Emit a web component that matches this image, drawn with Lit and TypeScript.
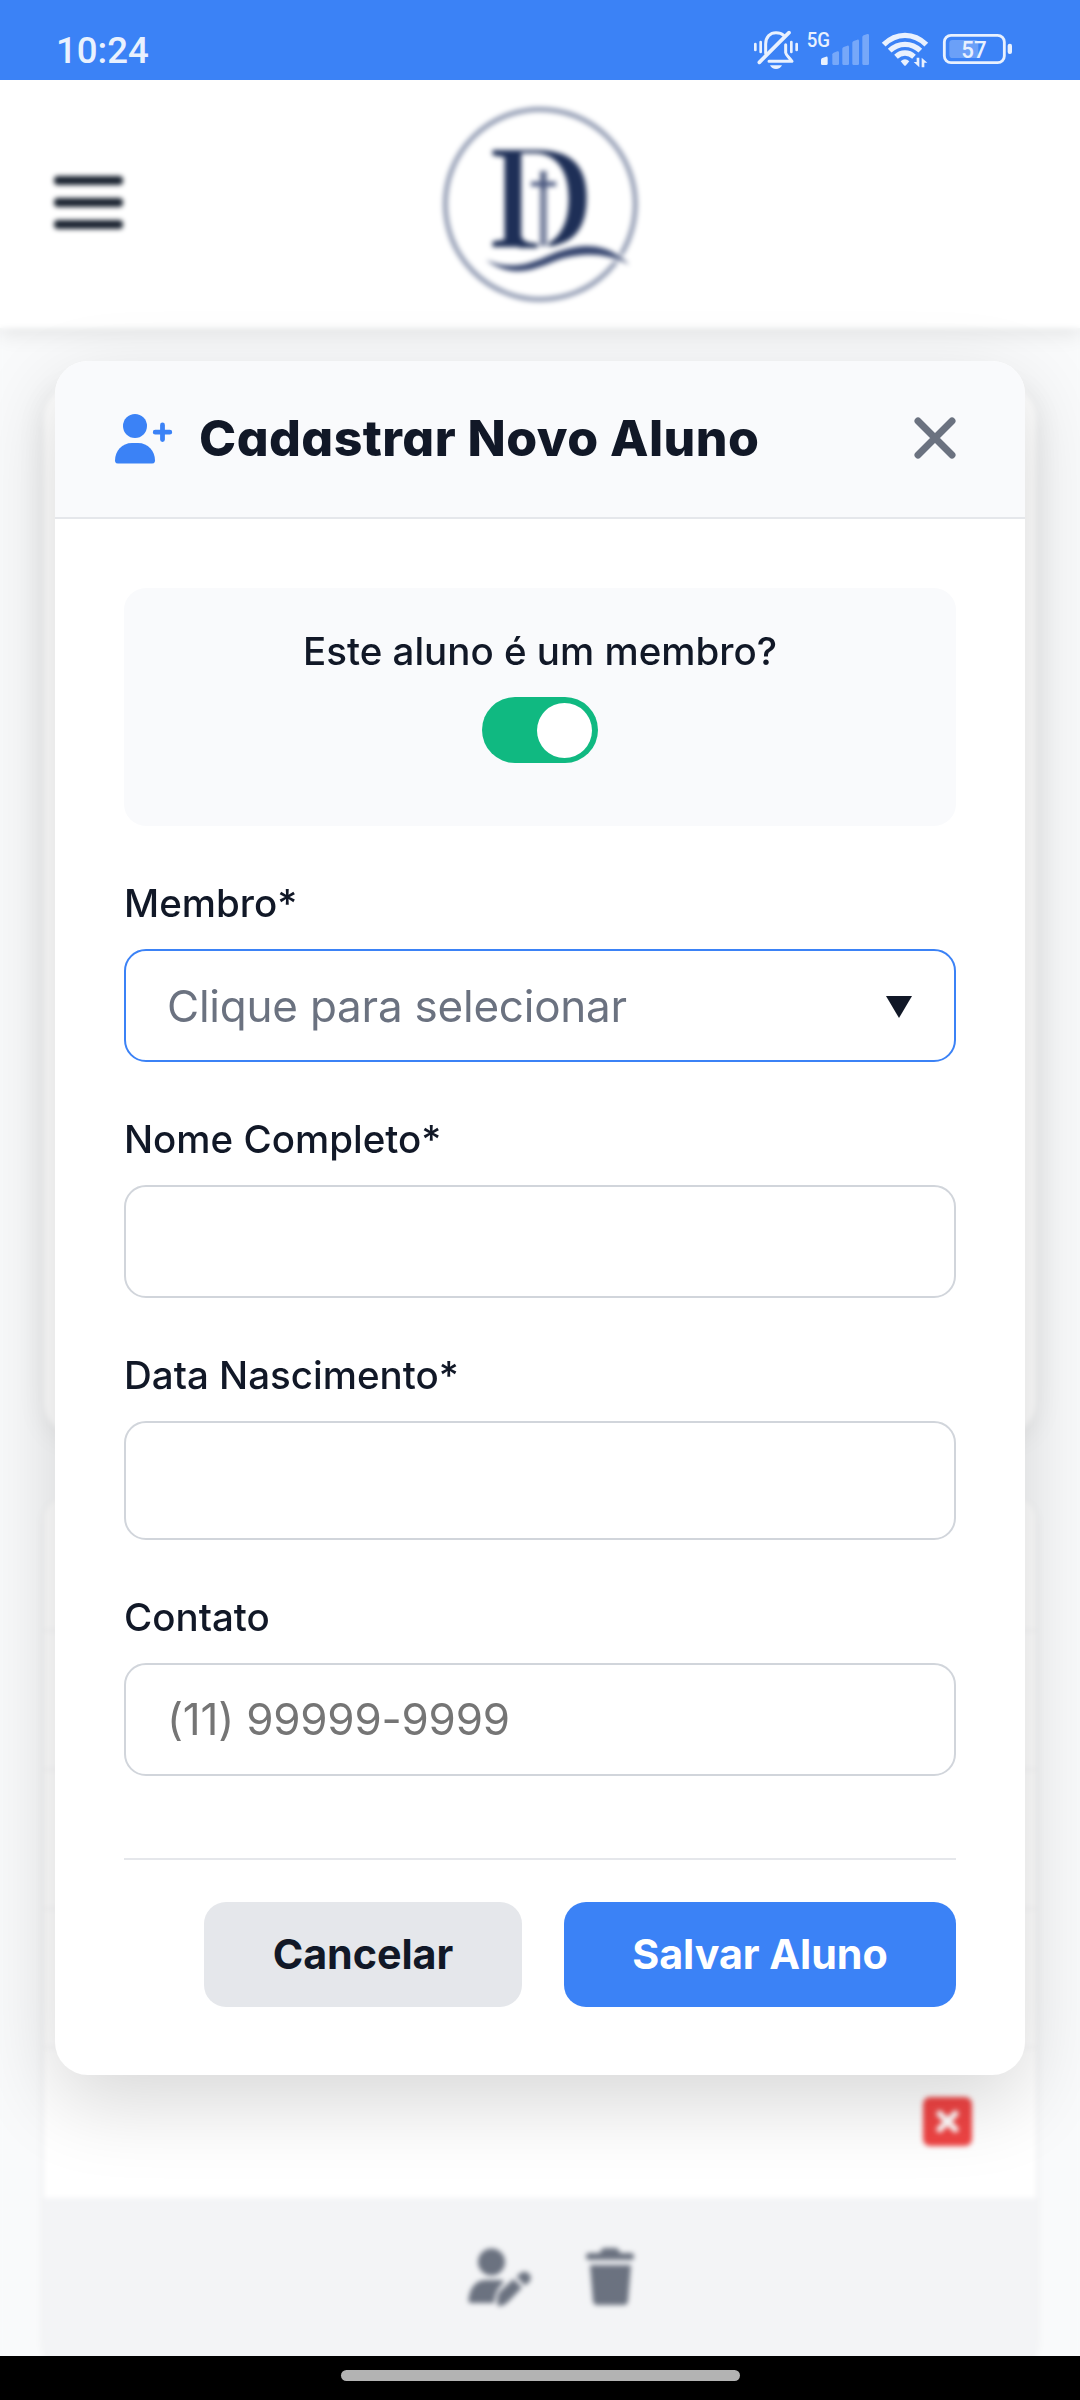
import { LitElement, html, css, svg } from "lit";
import { customElement } from "lit/decorators.js";

@customElement("status-bar")
class StatusBar extends LitElement {
  static styles = css`
    :host {
      display: flex;
      justify-content: space-between;
      box-sizing: border-box;
      height: 80px;
      padding: 28px 66px 0 56px;
      background: #3b82f6;
      color: #e9f1fe;
      font-family: Roboto, sans-serif;
    }
    .clock {
      padding-top: 1px;
      font-size: 36.600px;
      font-weight: 500;
      line-height: 44px;
    }
    .icons {
      display: block;
      width: 264px;
      height: 42px;
    }
    .icons text {
      font-family: Roboto, sans-serif;
      font-weight: 500;
    }
  `;

  render() {
    const bars = [
      [363, 170, 1],
      [397, 154, 0.35],
      [427, 137, 0.35],
      [457, 119, 0.35],
      [487, 102, 0.35],
    ];
    return html`
      <span class="clock">10:24</span>
      <svg class="icons" viewBox="150 84 792 126" fill="#e9f1fe">
        <g fill="none" stroke="#e9f1fe" stroke-width="9" stroke-linecap="round">
          <path d="M197 160V132C197 110 211 98 228 98C238 98 246 101 251 106" />
          <path d="M267 98L178 187" stroke-width="11" />
          <path d="M257 134V158C258 166 266 170 276 184H207" stroke-linejoin="round" />
          <path d="M166 132V150M182 126V156M274 126V156M290 132V150" stroke-width="8" />
        </g>
        <path d="M210 196H246C243 203 236 207 228 207S213 203 210 196Z" />
        <text x="320" y="142" font-size="62" textLength="70" lengthAdjust="spacingAndGlyphs">5G</text>
        ${bars.map(
          ([x, y, o]) => svg`<path opacity=${o} d="M${x} ${y + 9}Q${x} ${y + 6} ${x + 4} ${y + 4}L${x + 15} ${y}Q${x + 20} ${y - 1} ${x + 20} ${y + 4}V191Q${x + 20} 195 ${x + 16} 195H${x + 4}Q${x} 195 ${x} 191Z"/>`
        )}
        <g fill="none" stroke="#e9f1fe" stroke-width="16">
          <path d="M551 134Q579 106 615 106T679 134" />
          <path d="M569 152Q589 133 615 133T661 152" />
          <path d="M588 170Q600 159 615 159T642 170" />
        </g>
        <path d="M602 184Q615 172 628 184L618 196Q615 199 612 196Z" />
        <path d="M650 173H658V202L641 186H650ZM665 202V173L682 188H673V202Z" />
        <rect x="733" y="106" width="180" height="82" rx="20" fill="none" stroke="#e9f1fe" stroke-width="8.5" />
        <rect x="748" y="120" width="87" height="54" rx="10" opacity="0.28" />
        <rect x="923" y="131" width="13" height="31" rx="6" />
        <text x="784" y="174" font-size="70" textLength="76" lengthAdjust="spacingAndGlyphs">57</text>
      </svg>
    `;
  }
}

@customElement("class-page")
class ClassPage extends LitElement {
  static styles = css`
    :host {
      display: flex;
      flex-direction: column;
      height: 2276px;
      background: #f9fafb;
    }
    .top {
      display: grid;
      grid-template-columns: 1fr 240px 1fr;
      align-items: center;
      height: 248px;
      padding: 0 54px;
      background: #fff;
      box-shadow: 0 8px 18px rgba(0, 0, 0, 0.08);
      flex: none;
    }
    .burger {
      display: flex;
      flex-direction: column;
      gap: 12.500px;
      width: 69px;
      margin-top: -3px;
    }
    .burger i {
      height: 9.500px;
      border-radius: 4px;
      background: #19222f;
    }
    .logo {
      display: block;
      width: 240px;
      height: 230px;
      margin-top: 2px;
    }
    .logo text {
      font-family: "Liberation Serif", serif;
      font-weight: 700;
    }
    .card {
      margin: 0 44px;
      background: #fff;
      flex: none;
    }
    .summary {
      height: 1050px;
      margin-top: 57px;
      border-radius: 33px;
      box-shadow: 0 4px 30px rgba(0, 0, 0, 0.07);
    }
    .list {
      margin-top: 62px;
      border-radius: 22px;
      overflow: hidden;
      box-shadow: 0 3px 9px rgba(0, 0, 0, 0.07);
    }
    .row {
      box-sizing: border-box;
      height: 139px;
      border-bottom: 3px solid #f8f8f9;
    }
    .row.first {
      height: 135px;
    }
    .row.last {
      display: flex;
      justify-content: flex-end;
      height: 149px;
      padding: 48px 64px 0;
      border: 0;
    }
    .remove {
      width: 49px;
      height: 49px;
      border-radius: 7px;
      background: #ef4444;
    }
    .actions {
      display: flex;
      justify-content: center;
      gap: 53px;
      height: 164px;
      padding: 46px 0 0 22px;
      box-sizing: border-box;
      background: #f3f4f6;
      color: #6b7280;
    }
    .actions svg {
      height: 64px;
    }
  `;

  render() {
    return html`
      <div class="top">
        <div class="burger"><i></i><i></i><i></i></div>
        <svg class="logo" viewBox="0 0 720 690">
          <circle cx="361" cy="343" r="285" fill="none" stroke="#8e98b0" stroke-width="14" />
          <text x="210" y="470" font-size="448" fill="#1e2f57" textLength="311" lengthAdjust="spacingAndGlyphs">D</text>
          <path d="M304 190H345C415 192 446 250 446 325C446 400 420 440 386 460V478H354V461C325 461 304 452 304 436Z" fill="#fff" />
          <path d="M300 436C302 456 315 459 350 461V474H296Z" fill="#1e2f57" />
          <path d="M370 243V468" stroke="#5c6889" stroke-width="20" />
          <path d="M370 300V466" stroke="#a3abc0" stroke-width="5" />
          <path d="M333 282H408" stroke="#4a5880" stroke-width="14" />
          <path
            d="M198 510C260 535 310 530 375 501C440 472 540 435 628 524C560 488 480 485 400 515C330 545 270 562 198 510Z"
            fill="#34446e"
            stroke="#fff"
            stroke-width="14"
            paint-order="stroke"
          />
        </svg>
      </div>
      <div class="card summary"></div>
      <div class="card list">
        <div class="row first"></div>
        <div class="row"></div>
        <div class="row"></div>
        <div class="row"></div>
        <div class="row last">
          <svg class="remove" viewBox="0 0 50 50">
            <path d="M17 17L33 33M33 17L17 33" stroke="#fff" stroke-width="6.500" stroke-linecap="round" />
          </svg>
        </div>
        <div class="actions">
          <svg width="64" viewBox="0 0 64 64" fill="currentColor">
            <circle cx="23.500" cy="18" r="13.500" />
            <path d="M18 36H33Q35 36 36 38Q27 46 26 59H3Q0 59 .5 56C1.500 44 8 36 18 36Z" />
            <path d="M29.500 57C29 52 30.500 49 33 46.500L45.500 35L54 43.500L41 57C37 61 34 62 30.500 62C29 62 29.500 60 29.500 57Z" />
            <path d="M48.500 32.500L52 29.500C56 26 60 28 62 31C64 35 62 38 57 41.500Z" />
          </svg>
          <svg width="50" viewBox="0 0 50 64" fill="currentColor">
            <path d="M15 9Q16 4 20 4H30Q34 4 35 9H46Q49 9 49 12.500T46 16H4Q1 16 1 12.500T4 9Z" />
            <path d="M5 21H46L43 57Q42.500 61 39 61H12Q8.500 61 8 57Z" />
          </svg>
        </div>
      </div>
    `;
  }
}

@customElement("student-modal")
class StudentModal extends LitElement {
  static styles = css`
    :host {
      display: block;
      border-radius: 33px;
      background: #fff;
      box-shadow: 0 27px 82px rgba(0, 0, 0, 0.16);
      overflow: hidden;
      font-family: Inter, sans-serif;
      color: #111827;
    }
    .head {
      display: flex;
      align-items: center;
      box-sizing: border-box;
      height: 158px;
      padding: 0 69px 0 59px;
      background: #f9fafc;
      border-bottom: 2px solid #e5e7eb;
    }
    .add {
      display: block;
      width: 60px;
      height: 52px;
    }
    .title {
      flex: 1;
      margin: -2px 0 0 25px;
      font-size: 50px;
      line-height: 60px;
      font-weight: 800;
      letter-spacing: 0.450px;
      font-feature-settings: "cv11";
      white-space: nowrap;
    }
    .close {
      display: block;
      width: 42px;
      height: 42px;
      margin-top: -3px;
    }
    .body {
      padding: 69px 69px 68px;
    }
    .member {
      display: flex;
      flex-direction: column;
      align-items: center;
      gap: 23px;
      box-sizing: border-box;
      height: 238px;
      padding-top: 40px;
      border-radius: 22px;
      background: #f9fafc;
    }
    .label {
      display: block;
      font-size: 38.500px;
      line-height: 46px;
      font-weight: 500;
      white-space: nowrap;
    }
    .switch {
      display: flex;
      justify-content: flex-end;
      box-sizing: border-box;
      width: 116px;
      height: 66px;
      padding: 6px;
      border-radius: 33px;
      background: #10b981;
    }
    .knob {
      width: 55px;
      height: 55px;
      border-radius: 50%;
      background: #fff;
    }
    .field {
      display: flex;
      flex-direction: column;
      gap: 23px;
      margin-top: 54px;
    }
    .control {
      box-sizing: border-box;
      width: 100%;
      height: 113px;
      padding: 0 42px 0 41px;
      border: 2px solid #d1d5db;
      border-radius: 22px;
      background: #fff;
      font: 400 44px/54px Inter, sans-serif;
      letter-spacing: -0.220px;
      outline: none;
    }
    .control::placeholder {
      color: #757575;
      opacity: 1;
    }
    .phone {
      padding-bottom: 2px;
    }
    .date {
      height: 119px;
    }
    .select {
      display: flex;
      align-items: center;
      justify-content: space-between;
      border-color: #3b82f6;
      color: #6b7280;
    }
    .caret {
      width: 26px;
      height: 22px;
      margin-top: 2px;
    }
    .footer {
      display: flex;
      justify-content: flex-end;
      gap: 42px;
      margin-top: 82px;
      padding-top: 42px;
      border-top: 2px solid #e5e7eb;
    }
    .btn {
      width: 318px;
      height: 105px;
      padding: 0 0 2px;
      border: 0;
      border-radius: 22px;
      background: #e5e7eb;
      color: #111827;
      font: 700 41.250px/50px Inter, sans-serif;
      letter-spacing: -0.050px;
      white-space: nowrap;
    }
    .btn.primary {
      width: 392px;
      background: #3b82f6;
      color: #fff;
    }
  `;

  render() {
    return html`
      <div class="head">
        <svg class="add" viewBox="0 0 60 52" fill="#3b82f6">
          <circle cx="21" cy="13" r="12" />
          <path d="M18 30H24C34 30 41 38 41 47.500Q41 50.500 38 50.500H4Q1 50.500 1 47.500C1 38 8 30 18 30Z" />
          <path d="M48.500 12V26.500M41.200 19.200H55.800" stroke="#3b82f6" stroke-width="4.800" stroke-linecap="round" />
        </svg>
        <h2 class="title">Cadastrar Novo Aluno</h2>
        <svg class="close" viewBox="0 0 42 42">
          <path d="M4 4L38 38M38 4L4 38" stroke="#6b7280" stroke-width="7" stroke-linecap="round" />
        </svg>
      </div>
      <div class="body">
        <div class="member">
          <span class="label">Este aluno é um membro?</span>
          <div class="switch"><div class="knob"></div></div>
        </div>
        <div class="field">
          <span class="label">Membro*</span>
          <div class="control select">
            <span>Clique para selecionar</span>
            <svg class="caret" viewBox="0 0 26 22"><path d="M0 0H26L13 22Z" fill="#111827" /></svg>
          </div>
        </div>
        <div class="field">
          <label class="label" for="name">Nome Completo*</label>
          <input class="control" id="name" />
        </div>
        <div class="field">
          <label class="label" for="birth">Data Nascimento*</label>
          <input class="control date" id="birth" />
        </div>
        <div class="field">
          <label class="label" for="phone">Contato</label>
          <input class="control phone" id="phone" placeholder="(11) 99999-9999" />
        </div>
        <div class="footer">
          <button class="btn">Cancelar</button>
          <button class="btn primary">Salvar Aluno</button>
        </div>
      </div>
    `;
  }
}

@customElement("app-root")
class AppRoot extends LitElement {
  static styles = css`
    :host {
      display: flex;
      flex-direction: column;
      width: 1080px;
      height: 2400px;
      overflow: hidden;
      background: #000;
    }
    .viewport {
      position: relative;
      height: 2276px;
      overflow: hidden;
      flex: none;
    }
    .overlay {
      position: absolute;
      inset: 0;
      box-sizing: border-box;
      padding: 281px 55px 0;
      backdrop-filter: blur(2.400px);
    }
    .nav {
      display: flex;
      justify-content: center;
      height: 44px;
      padding-top: 14px;
      box-sizing: border-box;
      background: #000;
    }
    .pill {
      width: 399px;
      height: 11px;
      border-radius: 6px;
      background: #b3b3b3;
    }
  `;

  render() {
    return html`
      <status-bar></status-bar>
      <div class="viewport">
        <class-page></class-page>
        <div class="overlay"><student-modal></student-modal></div>
      </div>
      <div class="nav"><div class="pill"></div></div>
    `;
  }
}
